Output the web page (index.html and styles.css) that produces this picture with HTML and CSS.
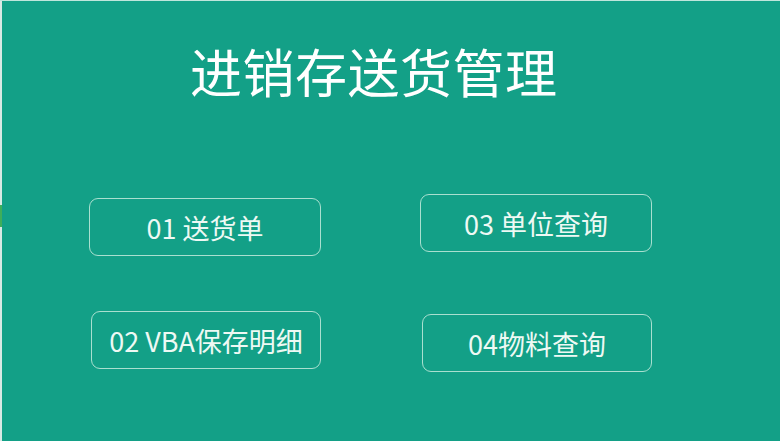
FILE: index.html
```html
<!DOCTYPE html>
<html lang="zh-CN">
<head>
<meta charset="utf-8">
<title>进销存送货管理</title>
<link rel="stylesheet" href="styles.css">
</head>
<body>
<div class="frame">
  <div class="edge"><span class="edge-mark"></span></div>
  <main class="panel">
    <h1 class="title">进销存送货管理</h1>
    <div class="menu">
      <button class="btn b1">01 送货单</button>
      <button class="btn b3">03 单位查询</button>
      <button class="btn b2">02 VBA保存明细</button>
      <button class="btn b4">04物料查询</button>
    </div>
  </main>
</div>
</body>
</html>
```
FILE: styles.css
```css
html, body {
  margin: 0;
  padding: 0;
  width: 780px;
  height: 441px;
  overflow: hidden;
  background: #13a087;
}
.frame {
  display: flex;
  width: 780px;
  height: 441px;
  border-top: 1px solid #bfe6dc;
  box-sizing: border-box;
}
.edge {
  width: 2px;
  flex: none;
  background: #d9e9e4;
  display: flex;
  flex-direction: column;
  padding-top: 204px;
  box-sizing: border-box;
}
.edge-mark {
  display: block;
  height: 22px;
  background: #3fae5a;
}
.panel {
  flex: 1;
  display: flex;
  flex-direction: column;
  font-family: "Noto Sans CJK SC", "Noto Sans", sans-serif;
  color: #eef9f4;
}
.title {
  margin: 38px 0 0 188px;
  font-family: "Noto Sans CJK SC", serif;
  font-weight: 400;
  font-size: 52px;
  line-height: 64px;
  letter-spacing: 0.5px;
  color: #ffffff;
}
.menu {
  display: grid;
  grid-template-columns: 232px 232px;
  column-gap: 99px;
  row-gap: 55px;
  margin: 91px 0 0 87px;
  align-items: start;
}
.btn {
  height: 58px;
  box-sizing: border-box;
  border: 1.5px solid #a9e0d0;
  border-radius: 9px;
  background: transparent;
  color: #eef9f4;
  font-family: "Noto Sans CJK SC", "Noto Sans", sans-serif;
  font-size: 27px;
  padding: 0;
  display: flex;
  align-items: center;
  justify-content: center;
  white-space: nowrap;
}
.b1 { margin-top: 4px; }
.b3 { margin-left: 0; }
.b2 { margin-left: 2px; margin-top: 0; }
.b4 { margin-left: 2px; margin-top: 3px; }
```
